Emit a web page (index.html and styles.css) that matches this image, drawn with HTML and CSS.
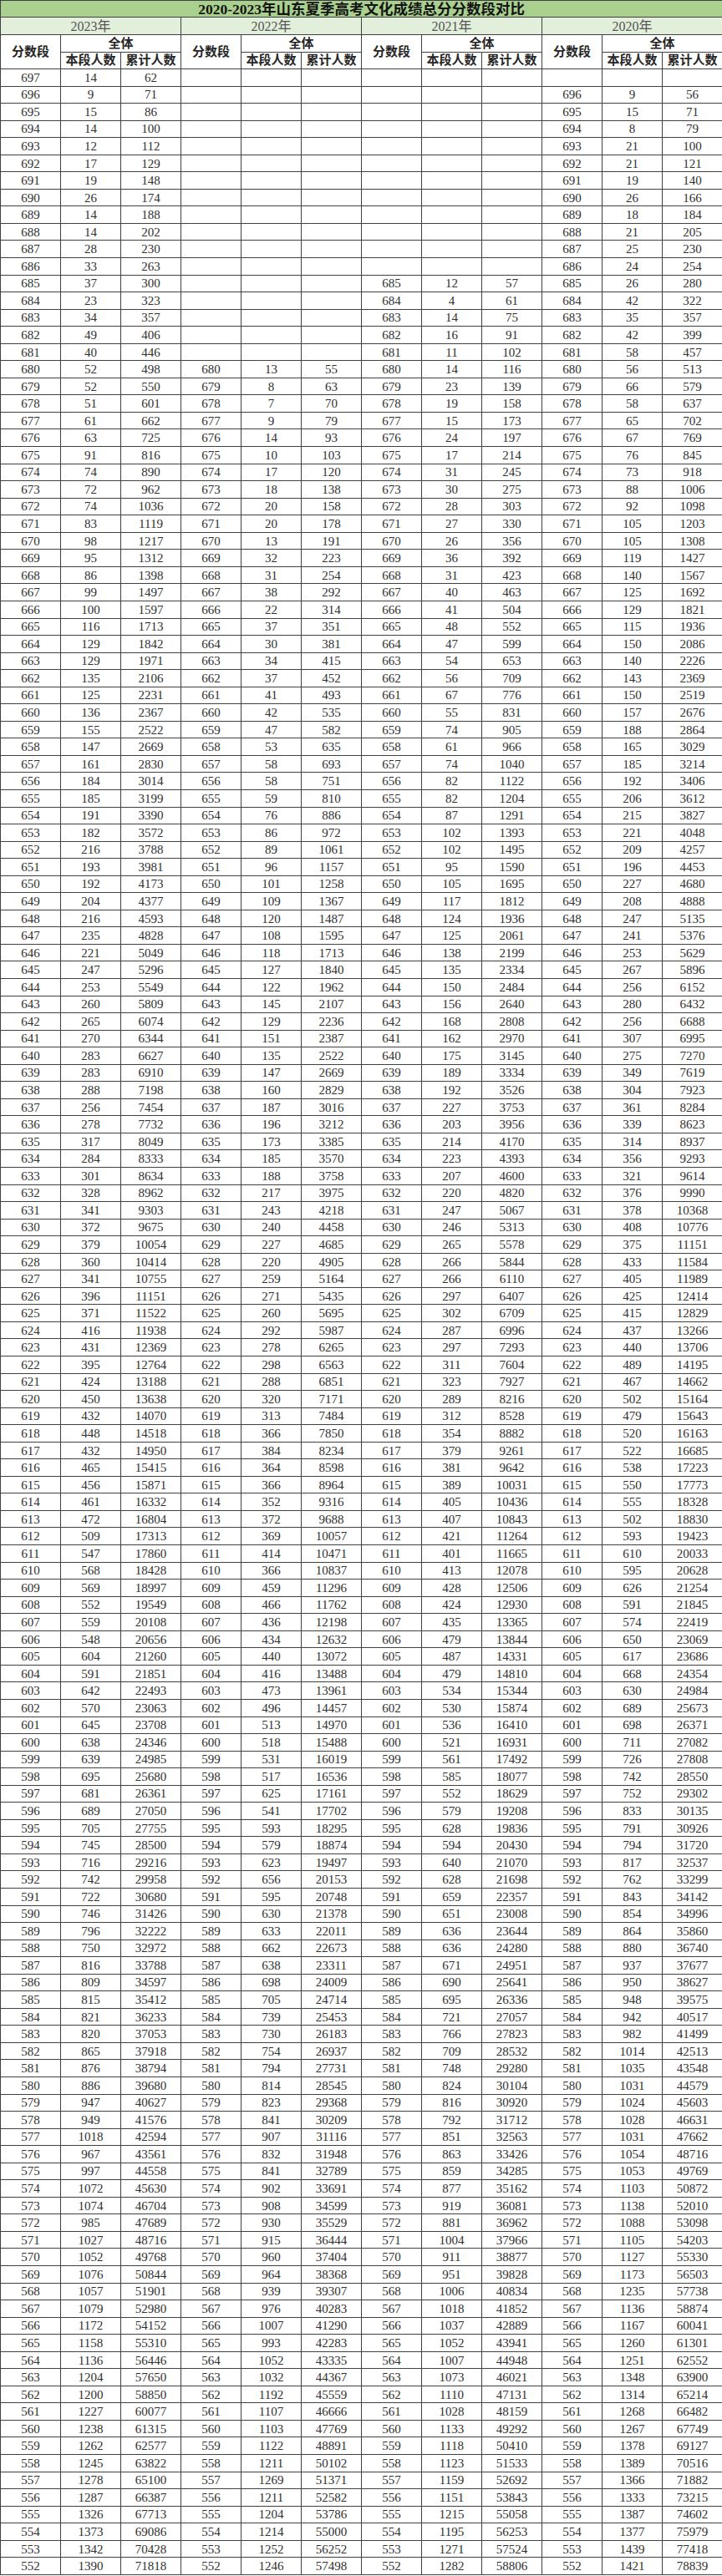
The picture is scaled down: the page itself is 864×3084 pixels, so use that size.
FILE: index.html
```html
<!DOCTYPE html>
<html lang="zh-CN">
<head>
<meta charset="utf-8">
<title>2020-2023年山东夏季高考文化成绩总分分数段对比</title>
<link rel="stylesheet" href="styles.css">
</head>
<body>
<table class="sheet">
<colgroup><col><col><col><col><col><col><col><col><col><col><col><col></colgroup>
<thead>
<tr class="title"><th colspan="12">2020-2023年山东夏季高考文化成绩总分分数段对比</th></tr>
<tr class="years"><th colspan="3">2023年</th><th colspan="3">2022年</th><th colspan="3">2021年</th><th colspan="3">2020年</th></tr>
<tr class="head"><th rowspan="2">分数段</th><th colspan="2">全体</th><th rowspan="2">分数段</th><th colspan="2">全体</th><th rowspan="2">分数段</th><th colspan="2">全体</th><th rowspan="2">分数段</th><th colspan="2">全体</th></tr>
<tr class="head"><th>本段人数</th><th>累计人数</th><th>本段人数</th><th>累计人数</th><th>本段人数</th><th>累计人数</th><th>本段人数</th><th>累计人数</th></tr>
</thead>
<tbody>
<tr><td>697<td>14<td>62<td><td><td><td><td><td><td><td><td></tr>
<tr><td>696<td>9<td>71<td><td><td><td><td><td><td>696<td>9<td>56</tr>
<tr><td>695<td>15<td>86<td><td><td><td><td><td><td>695<td>15<td>71</tr>
<tr><td>694<td>14<td>100<td><td><td><td><td><td><td>694<td>8<td>79</tr>
<tr><td>693<td>12<td>112<td><td><td><td><td><td><td>693<td>21<td>100</tr>
<tr><td>692<td>17<td>129<td><td><td><td><td><td><td>692<td>21<td>121</tr>
<tr><td>691<td>19<td>148<td><td><td><td><td><td><td>691<td>19<td>140</tr>
<tr><td>690<td>26<td>174<td><td><td><td><td><td><td>690<td>26<td>166</tr>
<tr><td>689<td>14<td>188<td><td><td><td><td><td><td>689<td>18<td>184</tr>
<tr><td>688<td>14<td>202<td><td><td><td><td><td><td>688<td>21<td>205</tr>
<tr><td>687<td>28<td>230<td><td><td><td><td><td><td>687<td>25<td>230</tr>
<tr><td>686<td>33<td>263<td><td><td><td><td><td><td>686<td>24<td>254</tr>
<tr><td>685<td>37<td>300<td><td><td><td>685<td>12<td>57<td>685<td>26<td>280</tr>
<tr><td>684<td>23<td>323<td><td><td><td>684<td>4<td>61<td>684<td>42<td>322</tr>
<tr><td>683<td>34<td>357<td><td><td><td>683<td>14<td>75<td>683<td>35<td>357</tr>
<tr><td>682<td>49<td>406<td><td><td><td>682<td>16<td>91<td>682<td>42<td>399</tr>
<tr><td>681<td>40<td>446<td><td><td><td>681<td>11<td>102<td>681<td>58<td>457</tr>
<tr><td>680<td>52<td>498<td>680<td>13<td>55<td>680<td>14<td>116<td>680<td>56<td>513</tr>
<tr><td>679<td>52<td>550<td>679<td>8<td>63<td>679<td>23<td>139<td>679<td>66<td>579</tr>
<tr><td>678<td>51<td>601<td>678<td>7<td>70<td>678<td>19<td>158<td>678<td>58<td>637</tr>
<tr><td>677<td>61<td>662<td>677<td>9<td>79<td>677<td>15<td>173<td>677<td>65<td>702</tr>
<tr><td>676<td>63<td>725<td>676<td>14<td>93<td>676<td>24<td>197<td>676<td>67<td>769</tr>
<tr><td>675<td>91<td>816<td>675<td>10<td>103<td>675<td>17<td>214<td>675<td>76<td>845</tr>
<tr><td>674<td>74<td>890<td>674<td>17<td>120<td>674<td>31<td>245<td>674<td>73<td>918</tr>
<tr><td>673<td>72<td>962<td>673<td>18<td>138<td>673<td>30<td>275<td>673<td>88<td>1006</tr>
<tr><td>672<td>74<td>1036<td>672<td>20<td>158<td>672<td>28<td>303<td>672<td>92<td>1098</tr>
<tr><td>671<td>83<td>1119<td>671<td>20<td>178<td>671<td>27<td>330<td>671<td>105<td>1203</tr>
<tr><td>670<td>98<td>1217<td>670<td>13<td>191<td>670<td>26<td>356<td>670<td>105<td>1308</tr>
<tr><td>669<td>95<td>1312<td>669<td>32<td>223<td>669<td>36<td>392<td>669<td>119<td>1427</tr>
<tr><td>668<td>86<td>1398<td>668<td>31<td>254<td>668<td>31<td>423<td>668<td>140<td>1567</tr>
<tr><td>667<td>99<td>1497<td>667<td>38<td>292<td>667<td>40<td>463<td>667<td>125<td>1692</tr>
<tr><td>666<td>100<td>1597<td>666<td>22<td>314<td>666<td>41<td>504<td>666<td>129<td>1821</tr>
<tr><td>665<td>116<td>1713<td>665<td>37<td>351<td>665<td>48<td>552<td>665<td>115<td>1936</tr>
<tr><td>664<td>129<td>1842<td>664<td>30<td>381<td>664<td>47<td>599<td>664<td>150<td>2086</tr>
<tr><td>663<td>129<td>1971<td>663<td>34<td>415<td>663<td>54<td>653<td>663<td>140<td>2226</tr>
<tr><td>662<td>135<td>2106<td>662<td>37<td>452<td>662<td>56<td>709<td>662<td>143<td>2369</tr>
<tr><td>661<td>125<td>2231<td>661<td>41<td>493<td>661<td>67<td>776<td>661<td>150<td>2519</tr>
<tr><td>660<td>136<td>2367<td>660<td>42<td>535<td>660<td>55<td>831<td>660<td>157<td>2676</tr>
<tr><td>659<td>155<td>2522<td>659<td>47<td>582<td>659<td>74<td>905<td>659<td>188<td>2864</tr>
<tr><td>658<td>147<td>2669<td>658<td>53<td>635<td>658<td>61<td>966<td>658<td>165<td>3029</tr>
<tr><td>657<td>161<td>2830<td>657<td>58<td>693<td>657<td>74<td>1040<td>657<td>185<td>3214</tr>
<tr><td>656<td>184<td>3014<td>656<td>58<td>751<td>656<td>82<td>1122<td>656<td>192<td>3406</tr>
<tr><td>655<td>185<td>3199<td>655<td>59<td>810<td>655<td>82<td>1204<td>655<td>206<td>3612</tr>
<tr><td>654<td>191<td>3390<td>654<td>76<td>886<td>654<td>87<td>1291<td>654<td>215<td>3827</tr>
<tr><td>653<td>182<td>3572<td>653<td>86<td>972<td>653<td>102<td>1393<td>653<td>221<td>4048</tr>
<tr><td>652<td>216<td>3788<td>652<td>89<td>1061<td>652<td>102<td>1495<td>652<td>209<td>4257</tr>
<tr><td>651<td>193<td>3981<td>651<td>96<td>1157<td>651<td>95<td>1590<td>651<td>196<td>4453</tr>
<tr><td>650<td>192<td>4173<td>650<td>101<td>1258<td>650<td>105<td>1695<td>650<td>227<td>4680</tr>
<tr><td>649<td>204<td>4377<td>649<td>109<td>1367<td>649<td>117<td>1812<td>649<td>208<td>4888</tr>
<tr><td>648<td>216<td>4593<td>648<td>120<td>1487<td>648<td>124<td>1936<td>648<td>247<td>5135</tr>
<tr><td>647<td>235<td>4828<td>647<td>108<td>1595<td>647<td>125<td>2061<td>647<td>241<td>5376</tr>
<tr><td>646<td>221<td>5049<td>646<td>118<td>1713<td>646<td>138<td>2199<td>646<td>253<td>5629</tr>
<tr><td>645<td>247<td>5296<td>645<td>127<td>1840<td>645<td>135<td>2334<td>645<td>267<td>5896</tr>
<tr><td>644<td>253<td>5549<td>644<td>122<td>1962<td>644<td>150<td>2484<td>644<td>256<td>6152</tr>
<tr><td>643<td>260<td>5809<td>643<td>145<td>2107<td>643<td>156<td>2640<td>643<td>280<td>6432</tr>
<tr><td>642<td>265<td>6074<td>642<td>129<td>2236<td>642<td>168<td>2808<td>642<td>256<td>6688</tr>
<tr><td>641<td>270<td>6344<td>641<td>151<td>2387<td>641<td>162<td>2970<td>641<td>307<td>6995</tr>
<tr><td>640<td>283<td>6627<td>640<td>135<td>2522<td>640<td>175<td>3145<td>640<td>275<td>7270</tr>
<tr><td>639<td>283<td>6910<td>639<td>147<td>2669<td>639<td>189<td>3334<td>639<td>349<td>7619</tr>
<tr><td>638<td>288<td>7198<td>638<td>160<td>2829<td>638<td>192<td>3526<td>638<td>304<td>7923</tr>
<tr><td>637<td>256<td>7454<td>637<td>187<td>3016<td>637<td>227<td>3753<td>637<td>361<td>8284</tr>
<tr><td>636<td>278<td>7732<td>636<td>196<td>3212<td>636<td>203<td>3956<td>636<td>339<td>8623</tr>
<tr><td>635<td>317<td>8049<td>635<td>173<td>3385<td>635<td>214<td>4170<td>635<td>314<td>8937</tr>
<tr><td>634<td>284<td>8333<td>634<td>185<td>3570<td>634<td>223<td>4393<td>634<td>356<td>9293</tr>
<tr><td>633<td>301<td>8634<td>633<td>188<td>3758<td>633<td>207<td>4600<td>633<td>321<td>9614</tr>
<tr><td>632<td>328<td>8962<td>632<td>217<td>3975<td>632<td>220<td>4820<td>632<td>376<td>9990</tr>
<tr><td>631<td>341<td>9303<td>631<td>243<td>4218<td>631<td>247<td>5067<td>631<td>378<td>10368</tr>
<tr><td>630<td>372<td>9675<td>630<td>240<td>4458<td>630<td>246<td>5313<td>630<td>408<td>10776</tr>
<tr><td>629<td>379<td>10054<td>629<td>227<td>4685<td>629<td>265<td>5578<td>629<td>375<td>11151</tr>
<tr><td>628<td>360<td>10414<td>628<td>220<td>4905<td>628<td>266<td>5844<td>628<td>433<td>11584</tr>
<tr><td>627<td>341<td>10755<td>627<td>259<td>5164<td>627<td>266<td>6110<td>627<td>405<td>11989</tr>
<tr><td>626<td>396<td>11151<td>626<td>271<td>5435<td>626<td>297<td>6407<td>626<td>425<td>12414</tr>
<tr><td>625<td>371<td>11522<td>625<td>260<td>5695<td>625<td>302<td>6709<td>625<td>415<td>12829</tr>
<tr><td>624<td>416<td>11938<td>624<td>292<td>5987<td>624<td>287<td>6996<td>624<td>437<td>13266</tr>
<tr><td>623<td>431<td>12369<td>623<td>278<td>6265<td>623<td>297<td>7293<td>623<td>440<td>13706</tr>
<tr><td>622<td>395<td>12764<td>622<td>298<td>6563<td>622<td>311<td>7604<td>622<td>489<td>14195</tr>
<tr><td>621<td>424<td>13188<td>621<td>288<td>6851<td>621<td>323<td>7927<td>621<td>467<td>14662</tr>
<tr><td>620<td>450<td>13638<td>620<td>320<td>7171<td>620<td>289<td>8216<td>620<td>502<td>15164</tr>
<tr><td>619<td>432<td>14070<td>619<td>313<td>7484<td>619<td>312<td>8528<td>619<td>479<td>15643</tr>
<tr><td>618<td>448<td>14518<td>618<td>366<td>7850<td>618<td>354<td>8882<td>618<td>520<td>16163</tr>
<tr><td>617<td>432<td>14950<td>617<td>384<td>8234<td>617<td>379<td>9261<td>617<td>522<td>16685</tr>
<tr><td>616<td>465<td>15415<td>616<td>364<td>8598<td>616<td>381<td>9642<td>616<td>538<td>17223</tr>
<tr><td>615<td>456<td>15871<td>615<td>366<td>8964<td>615<td>389<td>10031<td>615<td>550<td>17773</tr>
<tr><td>614<td>461<td>16332<td>614<td>352<td>9316<td>614<td>405<td>10436<td>614<td>555<td>18328</tr>
<tr><td>613<td>472<td>16804<td>613<td>372<td>9688<td>613<td>407<td>10843<td>613<td>502<td>18830</tr>
<tr><td>612<td>509<td>17313<td>612<td>369<td>10057<td>612<td>421<td>11264<td>612<td>593<td>19423</tr>
<tr><td>611<td>547<td>17860<td>611<td>414<td>10471<td>611<td>401<td>11665<td>611<td>610<td>20033</tr>
<tr><td>610<td>568<td>18428<td>610<td>366<td>10837<td>610<td>413<td>12078<td>610<td>595<td>20628</tr>
<tr><td>609<td>569<td>18997<td>609<td>459<td>11296<td>609<td>428<td>12506<td>609<td>626<td>21254</tr>
<tr><td>608<td>552<td>19549<td>608<td>466<td>11762<td>608<td>424<td>12930<td>608<td>591<td>21845</tr>
<tr><td>607<td>559<td>20108<td>607<td>436<td>12198<td>607<td>435<td>13365<td>607<td>574<td>22419</tr>
<tr><td>606<td>548<td>20656<td>606<td>434<td>12632<td>606<td>479<td>13844<td>606<td>650<td>23069</tr>
<tr><td>605<td>604<td>21260<td>605<td>440<td>13072<td>605<td>487<td>14331<td>605<td>617<td>23686</tr>
<tr><td>604<td>591<td>21851<td>604<td>416<td>13488<td>604<td>479<td>14810<td>604<td>668<td>24354</tr>
<tr><td>603<td>642<td>22493<td>603<td>473<td>13961<td>603<td>534<td>15344<td>603<td>630<td>24984</tr>
<tr><td>602<td>570<td>23063<td>602<td>496<td>14457<td>602<td>530<td>15874<td>602<td>689<td>25673</tr>
<tr><td>601<td>645<td>23708<td>601<td>513<td>14970<td>601<td>536<td>16410<td>601<td>698<td>26371</tr>
<tr><td>600<td>638<td>24346<td>600<td>518<td>15488<td>600<td>521<td>16931<td>600<td>711<td>27082</tr>
<tr><td>599<td>639<td>24985<td>599<td>531<td>16019<td>599<td>561<td>17492<td>599<td>726<td>27808</tr>
<tr><td>598<td>695<td>25680<td>598<td>517<td>16536<td>598<td>585<td>18077<td>598<td>742<td>28550</tr>
<tr><td>597<td>681<td>26361<td>597<td>625<td>17161<td>597<td>552<td>18629<td>597<td>752<td>29302</tr>
<tr><td>596<td>689<td>27050<td>596<td>541<td>17702<td>596<td>579<td>19208<td>596<td>833<td>30135</tr>
<tr><td>595<td>705<td>27755<td>595<td>593<td>18295<td>595<td>628<td>19836<td>595<td>791<td>30926</tr>
<tr><td>594<td>745<td>28500<td>594<td>579<td>18874<td>594<td>594<td>20430<td>594<td>794<td>31720</tr>
<tr><td>593<td>716<td>29216<td>593<td>623<td>19497<td>593<td>640<td>21070<td>593<td>817<td>32537</tr>
<tr><td>592<td>742<td>29958<td>592<td>656<td>20153<td>592<td>628<td>21698<td>592<td>762<td>33299</tr>
<tr><td>591<td>722<td>30680<td>591<td>595<td>20748<td>591<td>659<td>22357<td>591<td>843<td>34142</tr>
<tr><td>590<td>746<td>31426<td>590<td>630<td>21378<td>590<td>651<td>23008<td>590<td>854<td>34996</tr>
<tr><td>589<td>796<td>32222<td>589<td>633<td>22011<td>589<td>636<td>23644<td>589<td>864<td>35860</tr>
<tr><td>588<td>750<td>32972<td>588<td>662<td>22673<td>588<td>636<td>24280<td>588<td>880<td>36740</tr>
<tr><td>587<td>816<td>33788<td>587<td>638<td>23311<td>587<td>671<td>24951<td>587<td>937<td>37677</tr>
<tr><td>586<td>809<td>34597<td>586<td>698<td>24009<td>586<td>690<td>25641<td>586<td>950<td>38627</tr>
<tr><td>585<td>815<td>35412<td>585<td>705<td>24714<td>585<td>695<td>26336<td>585<td>948<td>39575</tr>
<tr><td>584<td>821<td>36233<td>584<td>739<td>25453<td>584<td>721<td>27057<td>584<td>942<td>40517</tr>
<tr><td>583<td>820<td>37053<td>583<td>730<td>26183<td>583<td>766<td>27823<td>583<td>982<td>41499</tr>
<tr><td>582<td>865<td>37918<td>582<td>754<td>26937<td>582<td>709<td>28532<td>582<td>1014<td>42513</tr>
<tr><td>581<td>876<td>38794<td>581<td>794<td>27731<td>581<td>748<td>29280<td>581<td>1035<td>43548</tr>
<tr><td>580<td>886<td>39680<td>580<td>814<td>28545<td>580<td>824<td>30104<td>580<td>1031<td>44579</tr>
<tr><td>579<td>947<td>40627<td>579<td>823<td>29368<td>579<td>816<td>30920<td>579<td>1024<td>45603</tr>
<tr><td>578<td>949<td>41576<td>578<td>841<td>30209<td>578<td>792<td>31712<td>578<td>1028<td>46631</tr>
<tr><td>577<td>1018<td>42594<td>577<td>907<td>31116<td>577<td>851<td>32563<td>577<td>1031<td>47662</tr>
<tr><td>576<td>967<td>43561<td>576<td>832<td>31948<td>576<td>863<td>33426<td>576<td>1054<td>48716</tr>
<tr><td>575<td>997<td>44558<td>575<td>841<td>32789<td>575<td>859<td>34285<td>575<td>1053<td>49769</tr>
<tr><td>574<td>1072<td>45630<td>574<td>902<td>33691<td>574<td>877<td>35162<td>574<td>1103<td>50872</tr>
<tr><td>573<td>1074<td>46704<td>573<td>908<td>34599<td>573<td>919<td>36081<td>573<td>1138<td>52010</tr>
<tr><td>572<td>985<td>47689<td>572<td>930<td>35529<td>572<td>881<td>36962<td>572<td>1088<td>53098</tr>
<tr><td>571<td>1027<td>48716<td>571<td>915<td>36444<td>571<td>1004<td>37966<td>571<td>1105<td>54203</tr>
<tr><td>570<td>1052<td>49768<td>570<td>960<td>37404<td>570<td>911<td>38877<td>570<td>1127<td>55330</tr>
<tr><td>569<td>1076<td>50844<td>569<td>964<td>38368<td>569<td>951<td>39828<td>569<td>1173<td>56503</tr>
<tr><td>568<td>1057<td>51901<td>568<td>939<td>39307<td>568<td>1006<td>40834<td>568<td>1235<td>57738</tr>
<tr><td>567<td>1079<td>52980<td>567<td>976<td>40283<td>567<td>1018<td>41852<td>567<td>1136<td>58874</tr>
<tr><td>566<td>1172<td>54152<td>566<td>1007<td>41290<td>566<td>1037<td>42889<td>566<td>1167<td>60041</tr>
<tr><td>565<td>1158<td>55310<td>565<td>993<td>42283<td>565<td>1052<td>43941<td>565<td>1260<td>61301</tr>
<tr><td>564<td>1136<td>56446<td>564<td>1052<td>43335<td>564<td>1007<td>44948<td>564<td>1251<td>62552</tr>
<tr><td>563<td>1204<td>57650<td>563<td>1032<td>44367<td>563<td>1073<td>46021<td>563<td>1348<td>63900</tr>
<tr><td>562<td>1200<td>58850<td>562<td>1192<td>45559<td>562<td>1110<td>47131<td>562<td>1314<td>65214</tr>
<tr><td>561<td>1227<td>60077<td>561<td>1107<td>46666<td>561<td>1028<td>48159<td>561<td>1268<td>66482</tr>
<tr><td>560<td>1238<td>61315<td>560<td>1103<td>47769<td>560<td>1133<td>49292<td>560<td>1267<td>67749</tr>
<tr><td>559<td>1262<td>62577<td>559<td>1122<td>48891<td>559<td>1118<td>50410<td>559<td>1378<td>69127</tr>
<tr><td>558<td>1245<td>63822<td>558<td>1211<td>50102<td>558<td>1123<td>51533<td>558<td>1389<td>70516</tr>
<tr><td>557<td>1278<td>65100<td>557<td>1269<td>51371<td>557<td>1159<td>52692<td>557<td>1366<td>71882</tr>
<tr><td>556<td>1287<td>66387<td>556<td>1211<td>52582<td>556<td>1151<td>53843<td>556<td>1333<td>73215</tr>
<tr><td>555<td>1326<td>67713<td>555<td>1204<td>53786<td>555<td>1215<td>55058<td>555<td>1387<td>74602</tr>
<tr><td>554<td>1373<td>69086<td>554<td>1214<td>55000<td>554<td>1195<td>56253<td>554<td>1377<td>75979</tr>
<tr><td>553<td>1342<td>70428<td>553<td>1252<td>56252<td>553<td>1271<td>57524<td>553<td>1439<td>77418</tr>
<tr><td>552<td>1390<td>71818<td>552<td>1246<td>57498<td>552<td>1282<td>58806<td>552<td>1421<td>78839</tr>
</tbody>
</table>
</body>
</html>
```
FILE: styles.css
```css
* {
  box-sizing: border-box;
}

html,
body {
  margin: 0;
  padding: 0;
  background: #ffffff;
}

.sheet {
  width: 864px;
  border-collapse: collapse;
  table-layout: fixed;
  font-family: "Liberation Serif", "Noto Sans CJK SC", serif;
  color: #303030;
}

.sheet col {
  width: 72px;
}

.sheet th,
.sheet td {
  border: 1px solid #404040;
  padding: 0;
  text-align: center;
  vertical-align: middle;
  white-space: nowrap;
  overflow: hidden;
}

.title th {
  height: 20px;
  background: #a9d08e;
  font-size: 17.5px;
  line-height: 18px;
  font-weight: bold;
  color: #141414;
}

.years th {
  height: 21px;
  background: #e2efda;
  font-size: 16px;
  line-height: 19px;
  font-weight: normal;
  color: #555555;
}

.head th {
  height: 20.5px;
  font-size: 15px;
  line-height: 18px;
  font-weight: bold;
  color: #262626;
}

.sheet tbody tr {
  height: 20.56px;
}

.sheet tbody td {
  font-size: 15px;
  line-height: 18px;
}
```
